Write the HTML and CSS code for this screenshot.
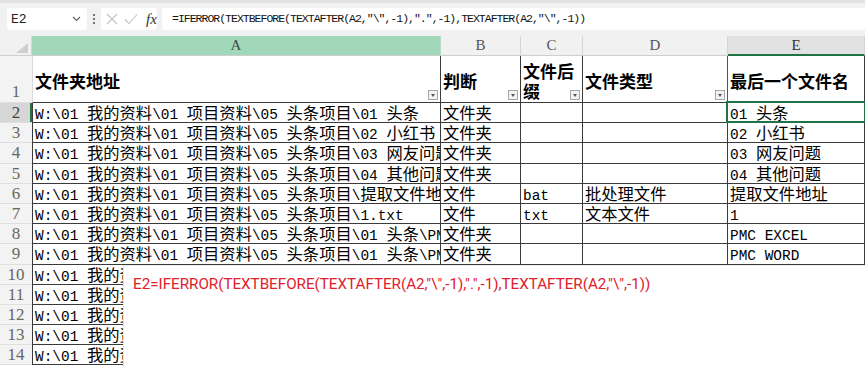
FILE: index.html
```html
<!DOCTYPE html>
<html lang="zh">
<head>
<meta charset="utf-8">
<title>Sheet</title>
<link rel="stylesheet" href="styles.css">
</head>
<body>
<div class="app">
  <div class="topbar">
    <div class="namebox">
      <span class="nb-text">E2</span>
      <svg class="chev" width="9" height="6" viewBox="0 0 9 6"><path d="M1 1 L4.5 4.5 L8 1" fill="none" stroke="#666" stroke-width="1.2"/></svg>
    </div>
    <div class="dots">
      <svg width="4" height="12" viewBox="0 0 4 12"><circle cx="2" cy="2" r="1.1" fill="#555"/><circle cx="2" cy="6" r="1.1" fill="#555"/><circle cx="2" cy="10" r="1.1" fill="#555"/></svg>
    </div>
    <div class="fxbox">
      <svg width="12" height="12" viewBox="0 0 12 12"><path d="M1 1 L11 11 M11 1 L1 11" stroke="#c4c4c4" stroke-width="1.1" fill="none"/></svg>
      <svg width="14" height="12" viewBox="0 0 14 12"><path d="M1 6.5 L5 10.5 L13 1.5" stroke="#c4c4c4" stroke-width="1.1" fill="none"/></svg>
      <span class="fx">fx</span>
    </div>
    <div class="formula">=IFERROR(TEXTBEFORE(TEXTAFTER(A2,"\",-1),".",-1),TEXTAFTER(A2,"\",-1))</div>
  </div>

  <div class="sheet">
    <div class="corner"><svg width="12" height="10" viewBox="0 0 12 10"><path d="M12 0 L12 10 L0 10 Z" fill="#cfcfcf"/></svg></div>
    <div class="ch ch-a">A</div>
    <div class="ch">B</div>
    <div class="ch">C</div>
    <div class="ch">D</div>
    <div class="ch ch-e">E</div>

    <div class="rh rh1">1</div>
    <div class="cell hd a1">文件夹地址<span class="flt"></span></div>
    <div class="cell hd">判断<span class="flt"></span></div>
    <div class="cell hd wrap">文件后缀<span class="flt"></span></div>
    <div class="cell hd">文件类型<span class="flt"></span></div>
    <div class="cell hd e1">最后一个文件名</div>

    <div class="rh on">2</div>
    <div class="cell t a"><span class="m">W:\01 </span>我的资料<span class="m">\01 </span>项目资料<span class="m">\05 </span>头条项目<span class="m">\01 </span>头条</div>
    <div class="cell t">文件夹</div>
    <div class="cell t"></div>
    <div class="cell t"></div>
    <div class="cell t sel"><span class="m">01 </span>头条</div>

    <div class="rh">3</div>
    <div class="cell t a"><span class="m">W:\01 </span>我的资料<span class="m">\01 </span>项目资料<span class="m">\05 </span>头条项目<span class="m">\02 </span>小红书</div>
    <div class="cell t">文件夹</div>
    <div class="cell t"></div>
    <div class="cell t"></div>
    <div class="cell t"><span class="m">02 </span>小红书</div>

    <div class="rh">4</div>
    <div class="cell t a"><span class="m">W:\01 </span>我的资料<span class="m">\01 </span>项目资料<span class="m">\05 </span>头条项目<span class="m">\03 </span>网友问题</div>
    <div class="cell t">文件夹</div>
    <div class="cell t"></div>
    <div class="cell t"></div>
    <div class="cell t"><span class="m">03 </span>网友问题</div>

    <div class="rh">5</div>
    <div class="cell t a"><span class="m">W:\01 </span>我的资料<span class="m">\01 </span>项目资料<span class="m">\05 </span>头条项目<span class="m">\04 </span>其他问题</div>
    <div class="cell t">文件夹</div>
    <div class="cell t"></div>
    <div class="cell t"></div>
    <div class="cell t"><span class="m">04 </span>其他问题</div>

    <div class="rh">6</div>
    <div class="cell t a"><span class="m">W:\01 </span>我的资料<span class="m">\01 </span>项目资料<span class="m">\05 </span>头条项目<span class="m">\</span>提取文件地址</div>
    <div class="cell t">文件</div>
    <div class="cell t"><span class="m">bat</span></div>
    <div class="cell t">批处理文件</div>
    <div class="cell t">提取文件地址</div>

    <div class="rh">7</div>
    <div class="cell t a"><span class="m">W:\01 </span>我的资料<span class="m">\01 </span>项目资料<span class="m">\05 </span>头条项目<span class="m">\1.txt</span></div>
    <div class="cell t">文件</div>
    <div class="cell t"><span class="m">txt</span></div>
    <div class="cell t">文本文件</div>
    <div class="cell t"><span class="m">1</span></div>

    <div class="rh">8</div>
    <div class="cell t a"><span class="m">W:\01 </span>我的资料<span class="m">\01 </span>项目资料<span class="m">\05 </span>头条项目<span class="m">\01 </span>头条<span class="m">\PMC EXCEL</span></div>
    <div class="cell t">文件夹</div>
    <div class="cell t"></div>
    <div class="cell t"></div>
    <div class="cell t"><span class="m">PMC EXCEL</span></div>

    <div class="rh">9</div>
    <div class="cell t a"><span class="m">W:\01 </span>我的资料<span class="m">\01 </span>项目资料<span class="m">\05 </span>头条项目<span class="m">\01 </span>头条<span class="m">\PMC WORD</span></div>
    <div class="cell t">文件夹</div>
    <div class="cell t"></div>
    <div class="cell t"></div>
    <div class="cell t"><span class="m">PMC WORD</span></div>

    <div class="rh">10</div>
    <div class="cell t a"><span class="m">W:\01 </span>我的资料<span class="m">\01 </span>项目资料</div>
    <div class="cell"></div><div class="cell"></div><div class="cell"></div><div class="cell"></div>

    <div class="rh">11</div>
    <div class="cell t a"><span class="m">W:\01 </span>我的资料<span class="m">\01 </span>项目资料</div>
    <div class="cell"></div><div class="cell"></div><div class="cell"></div><div class="cell"></div>

    <div class="rh">12</div>
    <div class="cell t a"><span class="m">W:\01 </span>我的资料<span class="m">\01 </span>项目资料</div>
    <div class="cell"></div><div class="cell"></div><div class="cell"></div><div class="cell"></div>

    <div class="rh">13</div>
    <div class="cell t a"><span class="m">W:\01 </span>我的资料<span class="m">\01 </span>项目资料</div>
    <div class="cell"></div><div class="cell"></div><div class="cell"></div><div class="cell"></div>

    <div class="rh">14</div>
    <div class="cell t a"><span class="m">W:\01 </span>我的资料<span class="m">\01 </span>项目资料</div>
    <div class="cell"></div><div class="cell"></div><div class="cell"></div><div class="cell"></div>
  </div>

  <div class="note">E2=IFERROR(TEXTBEFORE(TEXTAFTER(A2,"\",-1),".",-1),TEXTAFTER(A2,"\",-1))</div>
</div>
</body>
</html>
```

FILE: styles.css
```css
* { box-sizing: border-box; }

body {
  margin: 0;
  background: #ffffff;
  font-family: "Noto Sans CJK SC", sans-serif;
  color: #000;
}

.app {
  position: relative;
  width: 865px;
  height: 368px;
  overflow: hidden;
  background: #fff;
}

/* ---------- formula bar ---------- */
.topbar {
  height: 36px;
  background: #f1f1f1;
  border-top: 3px solid #e2e2e2;
  display: flex;
  align-items: flex-start;
  padding: 5px 0 0 7px;
}

.namebox {
  width: 80px;
  height: 22px;
  background: #fff;
  border-radius: 3px;
  display: flex;
  align-items: center;
  justify-content: space-between;
  padding: 0 6px 0 4px;
}

.nb-text {
  font-family: "Liberation Mono", monospace;
  font-size: 13px;
  color: #222;
}

.dots {
  width: 14px;
  height: 22px;
  display: flex;
  align-items: center;
  justify-content: center;
}

.fxbox {
  width: 56px;
  height: 22px;
  background: #fff;
  border-radius: 3px;
  display: flex;
  align-items: center;
  gap: 6px;
  padding-left: 5px;
}

.fx {
  font-family: "Liberation Serif", serif;
  font-style: italic;
  font-size: 15px;
  color: #333;
  margin-left: 2px;
}

.formula {
  flex: 1;
  height: 22px;
  margin-left: 5px;
  background: #fff;
  border-radius: 3px 0 0 3px;
  padding-left: 10px;
  font-family: "Liberation Mono", monospace;
  font-size: 11.5px;
  letter-spacing: -1px;
  line-height: 22px;
  color: #111;
  white-space: nowrap;
}

/* ---------- sheet grid ---------- */
.sheet {
  display: grid;
  grid-template-columns: 32px 409px 80px 62px 145px 137px;
  grid-template-rows: 20px 47px repeat(13, 20.2px);
}

.corner {
  background: #f1f1f1;
  border-right: 1px solid #d6d6d6;
  border-bottom: 1px solid #cfcfcf;
  display: flex;
  align-items: flex-end;
  justify-content: flex-end;
  padding: 0 3px 2px 0;
}

.ch {
  background: #f1f1f1;
  border-right: 1px solid #d4d4d4;
  border-bottom: 1px solid #cfcfcf;
  font-family: "Liberation Serif", serif;
  font-size: 15px;
  color: #555;
  display: flex;
  align-items: center;
  justify-content: center;
}

.ch-a {
  background: #a2d8ba;
  color: #3c4f45;
  border-right-color: #b9dcc8;
}

.ch-e {
  background: #e2e2e2;
  border-bottom: 2px solid #217346;
  color: #333;
}

.rh {
  background: #f3f3f3;
  border-bottom: 1px solid #dedede;
  font-family: "Liberation Serif", serif;
  font-size: 17px;
  color: #666;
  display: flex;
  align-items: center;
  justify-content: center;
  line-height: 1;
}

.rh1 {
  align-items: flex-end;
  padding-bottom: 2px;
}

.rh.on {
  background: #d7d7d7;
  color: #444;
  box-shadow: inset -2px 0 0 #217346;
}

.cell {
  position: relative;
  display: block;
  border-right: 1px solid #dadada;
  border-bottom: 1px solid #dadada;
  overflow: hidden;
  white-space: pre;
  padding: 0 2px;
  font-size: 16.3px;
  line-height: 19px;
}

.m {
  font-family: "Liberation Mono", monospace;
  font-size: 14.45px;
}

.t {
  border-right-color: #3a3a3a;
  border-bottom-color: #3a3a3a;
}

.a {
  border-left: 1px solid #3a3a3a;
}

.hd {
  display: flex;
  align-items: center;
  font-weight: 700;
  font-size: 17px;
  line-height: 20px;
  border-right-color: #3a3a3a;
  border-bottom-color: #3a3a3a;
  padding-top: 3px;
  white-space: nowrap;
}

.a1 {
  border-left: 1px solid #dadada;
}

.e1 {
  border-left: 1px solid #2e6b47;
  margin-left: -1px;
}

.wrap {
  white-space: normal;
  padding-right: 0;
}

.flt {
  position: absolute;
  right: 2px;
  bottom: 2px;
  width: 10px;
  height: 10px;
  background: #f2f2f2;
  border: 1px solid #a8a8a8;
}

.flt::after {
  content: "";
  position: absolute;
  left: 2px;
  top: 3px;
  border-left: 2px solid transparent;
  border-right: 2px solid transparent;
  border-top: 3px solid #555;
}

.sel {
  overflow: visible;
}

.sel::after {
  content: "";
  position: absolute;
  left: -2px;
  top: -2px;
  right: -2px;
  bottom: -1px;
  border: 2px solid #217346;
}

/* ---------- overlay note ---------- */
.note {
  position: absolute;
  left: 123px;
  top: 265px;
  right: 0;
  bottom: 0;
  background: #fff;
  border-left: 1px solid #e4e4e4;
  border-top: 1px solid #ececec;
  padding: 8px 0 0 9px;
  font-family: Roboto, "Liberation Sans", sans-serif;
  font-size: 15.2px;
  line-height: 20px;
  color: #e3202b;
  white-space: nowrap;
}
```
